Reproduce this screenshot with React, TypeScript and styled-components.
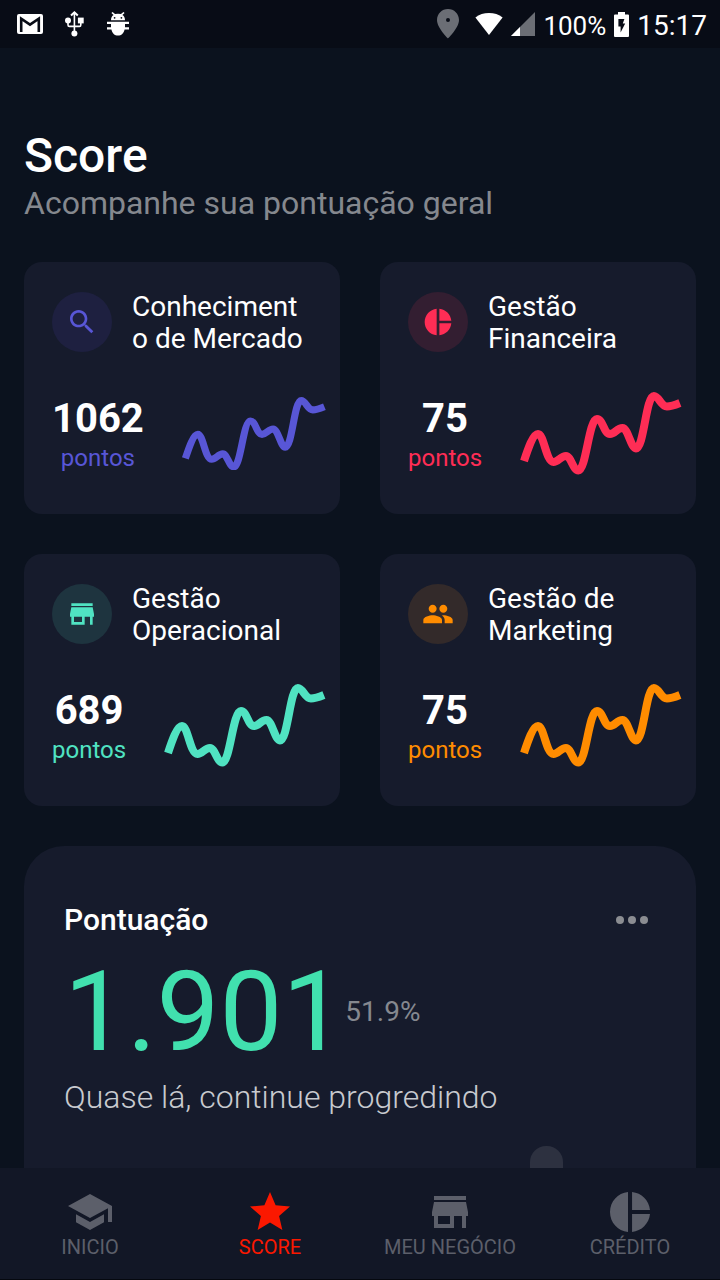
import React from "react";
import styled, { createGlobalStyle } from "styled-components";

const GlobalStyle = createGlobalStyle`
  *, *::before, *::after { box-sizing: border-box; }
  body {
    margin: 0;
    background: #0b121e;
    color: #ffffff;
    font-family: Roboto, "Liberation Sans", sans-serif;
  }
  h1, h2, h3, p { margin: 0; font-weight: 400; }
  svg { display: block; flex-shrink: 0; }
`;

const Screen = styled.div`
  display: flex;
  flex-direction: column;
  height: 100vh;
`;

const StatusBar = styled.header`
  display: flex;
  justify-content: space-between;
  align-items: center;
  flex-shrink: 0;
  height: 48px;
  padding: 0 13px 0 17px;
  background: #080c16;
`;

const StatusGroup = styled.div<{ $gap: number }>`
  display: flex;
  align-items: center;
  gap: ${(p) => p.$gap}px;
`;

const StatusText = styled.span<{ $size: number }>`
  font-size: ${(p) => p.$size}px;
  line-height: 32px;
  padding-top: 4px;
`;

const Content = styled.main`
  flex: 1;
  min-height: 0;
  overflow-y: auto;
  scrollbar-width: none;
  padding: 80px 24px 40px;
`;

const Title = styled.h1`
  font-size: 48px;
  font-weight: 500;
  line-height: 56px;
`;

const Subtitle = styled.p`
  font-size: 32px;
  line-height: 38px;
  color: #85888e;
`;

const CardGrid = styled.section`
  display: grid;
  grid-template-columns: 1fr 1fr;
  gap: 40px;
  margin: 40px 0;
`;

const Card = styled.article`
  display: flex;
  flex-direction: column;
  gap: 37px;
  min-width: 0;
  padding: 28px 14px 39px 28px;
  border-radius: 18px;
  background: #161b2c;
`;

const CardHeader = styled.div`
  display: flex;
  align-items: center;
  gap: 20px;
  height: 64px;
  padding-right: 20px;
`;

const IconDisc = styled.div<{ $color: string; $tint: string }>`
  display: flex;
  align-items: center;
  justify-content: center;
  flex-shrink: 0;
  width: 60px;
  height: 60px;
  border-radius: 50%;
  color: ${(p) => p.$color};
  background: ${(p) => p.$tint};
`;

const CardTitle = styled.h2`
  flex: 1;
  min-width: 0;
  padding-top: 2px;
  font-size: 28px;
  line-height: 32px;
  overflow-wrap: anywhere;
`;

const CardBody = styled.div`
  display: flex;
  align-items: center;
  gap: 36px;
  min-height: 84px;
`;

const Points = styled.div`
  display: flex;
  flex-direction: column;
  align-items: center;
  padding-top: 4px;
`;

const PointsValue = styled.strong`
  font-size: 40px;
  font-weight: 700;
  line-height: 46px;
`;

const PointsLabel = styled.span<{ $color: string }>`
  font-size: 24px;
  line-height: 32px;
  color: ${(p) => p.$color};
`;

const Sparkline = styled.svg<{ $color: string }>`
  flex: 1;
  min-width: 0;
  max-width: 240px;
  margin-left: auto;
  stroke: ${(p) => p.$color};
  stroke-width: 8;
  fill: none;
`;

const ScoreCard = styled.section`
  padding: 54px 40px 40px;
  border-radius: 40px;
  background: #161b2c;
`;

const ScoreHeader = styled.div`
  display: flex;
  align-items: center;
  justify-content: space-between;
  height: 40px;
`;

const ScoreTitle = styled.h3`
  font-size: 30px;
  font-weight: 500;
  line-height: 40px;
`;

const MoreButton = styled.button`
  display: flex;
  align-items: center;
  gap: 4px;
  padding: 8px;
  border: 0;
  background: none;
`;

const Dot = styled.span`
  width: 8px;
  height: 8px;
  border-radius: 50%;
  background: #8b8d92;
`;

const ScoreLine = styled.div`
  display: flex;
  align-items: center;
  padding-top: 6px;
`;

const ScoreValue = styled.strong`
  font-size: 112px;
  font-weight: 400;
  line-height: 132px;
  color: #41e0ae;
`;

const ScorePercent = styled.span`
  font-size: 28px;
  line-height: 32px;
  color: #85888f;
`;

const ScoreHint = styled.p`
  font-size: 32px;
  font-weight: 300;
  line-height: 38px;
  color: #c8cacf;
`;

const BarArea = styled.div`
  display: flex;
  align-items: flex-end;
  justify-content: flex-end;
  height: 240px;
  margin-top: 30px;
  padding-right: 93px;
`;

const Bar = styled.div`
  width: 33px;
  height: 240px;
  border-radius: 16px;
  background: #2d3140;
`;

const TabBar = styled.nav`
  display: flex;
  flex-shrink: 0;
  height: 112px;
  padding-top: 20px;
  border-bottom: 1px solid #05080f;
  background: #121726;
`;

const Tab = styled.a<{ $active?: boolean }>`
  display: flex;
  flex: 1;
  flex-direction: column;
  align-items: center;
  font-size: 20px;
  line-height: 22px;
  text-decoration: none;
  color: ${(p) => (p.$active ? "#fb1800" : "#5c5f6a")};
`;

const paths = {
  search:
    "M15.5 14h-.79l-.28-.27C15.41 12.59 16 11.11 16 9.5 16 5.91 13.09 3 9.5 3S3 5.91 3 9.5 5.91 16 9.5 16c1.61 0 3.09-.59 4.23-1.57l.27.28v.79l5 4.99L20.49 19l-4.99-5zm-6 0C7.01 14 5 11.99 5 9.5S7.01 5 9.5 5 14 7.01 14 9.5 11.99 14 9.5 14z",
  pie: "M11 2v20c-5.07-.5-9-4.79-9-10s3.93-9.5 9-10zm2.03 0v8.99H22c-.47-4.74-4.24-8.52-8.97-8.99zm0 11.01V22c4.74-.47 8.5-4.25 8.97-8.99h-8.97z",
  store:
    "M20 4H4v2h16V4zm1 10v-2l-1-5H4l-1 5v2h1v6h10v-6h4v6h2v-6h1zm-9 4H6v-4h6v4z",
  people:
    "M16 11c1.66 0 2.99-1.34 2.99-3S17.66 5 16 5c-1.66 0-3 1.34-3 3s1.34 3 3 3zm-8 0c1.66 0 2.99-1.34 2.99-3S9.66 5 8 5C6.34 5 5 6.34 5 8s1.34 3 3 3zm0 2c-2.33 0-7 1.17-7 3.5V19h14v-2.5c0-2.33-4.67-3.5-7-3.5zm8 0c-.29 0-.62.02-.97.05 1.16.84 1.97 1.97 1.97 3.45V19h6v-2.5c0-2.33-4.67-3.5-7-3.5z",
  school: "M5 13.18v4L12 21l7-3.82v-4L12 17l-7-3.82zM12 3L1 9l11 6 9-4.91V17h2V9L12 3z",
  star: "M12 17.27L18.18 21l-1.64-7.03L22 9.24l-7.19-.61L12 2 9.19 8.63 2 9.24l5.46 4.73L5.82 21z",
};

type IconName = keyof typeof paths;

const Icon = ({ name, size }: { name: IconName; size: number }) => (
  <svg width={size} height={size} viewBox="0 0 24 24" fill="currentColor" aria-hidden="true">
    <path d={paths[name]} />
  </svg>
);

const MailIcon = () => (
  <svg width="26" height="20" viewBox="0 0 26 20" aria-hidden="true">
    <rect width="26" height="20" rx="2" fill="#fff" />
    <path d="M4.2 18V4.6L13 10.6L21.8 4.6V18" fill="none" stroke="#080c16" strokeWidth="2.6" />
  </svg>
);

const UsbIcon = () => (
  <svg width="20" height="26" viewBox="0 0 20 26" aria-hidden="true">
    <g fill="none" stroke="#fff" strokeWidth="1.6">
      <path d="M9.4 1.6V22M3 10V14Q3 15.4 4.4 15.4H14.4Q15.8 15.4 15.8 14V10" />
      <path d="M6 4.6L9.4 1.4L12.8 4.6" strokeWidth="2" />
    </g>
    <g fill="#fff">
      <circle cx="3" cy="9.6" r="3" />
      <rect x="12.9" y="6.6" width="5.8" height="5.8" />
      <circle cx="9.4" cy="22.4" r="3" />
    </g>
  </svg>
);

const BugIcon = () => (
  <svg width="22" height="24" viewBox="0 0 22 24" aria-hidden="true">
    <path
      fill="#fff"
      d="M4 8.2C4 5.6 5 3.8 6.6 2.9L4.4 1L5.6 0L8 2.1Q11 1.2 14 2.1L16.4 0L17.6 1L15.4 2.9C17 3.8 18 5.6 18 8.2ZM0 9.8H22V12H18V15.2H22V17.4H17.6C16.8 21 14.4 23.6 11 23.6S5.2 21 4.4 17.4H0V15.2H4V12H0Z"
    />
    <circle cx="7.6" cy="5.8" r="0.9" fill="#080c16" />
    <circle cx="14.4" cy="5.8" r="0.9" fill="#080c16" />
  </svg>
);

const PinIcon = () => (
  <svg width="22" height="30" viewBox="0 0 22 30" aria-hidden="true">
    <path
      fill="#6b6e75"
      fillRule="evenodd"
      d="M11 0C4.9 0 0 4.9 0 11C0 19 11 29.4 11 29.4S22 19 22 11C22 4.9 17.1 0 11 0ZM11 9A2 2 0 1 1 11 13A2 2 0 1 1 11 9Z"
    />
  </svg>
);

const WifiIcon = () => (
  <svg width="28" height="24" viewBox="0 0 28 24" aria-hidden="true">
    <path fill="#fff" d="M14 23L0.4 5.4C4 2.4 9 1 14 1S24 2.4 27.6 5.4Z" />
  </svg>
);

const SignalIcon = () => (
  <svg width="24" height="24" viewBox="0 0 24 24" aria-hidden="true">
    <path fill="#6b6e75" d="M0 24L24 0V24Z" />
    <path fill="#fff" d="M0 24L9 15V24Z" />
  </svg>
);

const BatteryIcon = () => (
  <svg width="15" height="25" viewBox="0 0 15 25" aria-hidden="true">
    <path fill="#fff" d="M4 0H11V2.4H14Q15 2.4 15 3.4V24Q15 25 14 25H1Q0 25 0 24V3.4Q0 2.4 1 2.4H4Z" />
    <path fill="#080c16" d="M4.4 7H10.4L8.8 11.4H11.2L6.6 20.6V14.6H4.4Z" />
  </svg>
);

const areas: {
  title: string;
  value: string;
  color: string;
  tint: string;
  icon: IconName;
}[] = [
  { title: "Conhecimento de Mercado", value: "1062", color: "#5856d6", tint: "#1e2040", icon: "search" },
  { title: "Gestão Financeira", value: "75", color: "#ff2d55", tint: "#331e31", icon: "pie" },
  { title: "Gestão Operacional", value: "689", color: "#50e3c2", tint: "#1e343f", icon: "store" },
  { title: "Gestão de Marketing", value: "75", color: "#ff8c00", tint: "#332a2a", icon: "people" },
];

const tabs: { label: string; icon: IconName; active?: boolean }[] = [
  { label: "INICIO", icon: "school" },
  { label: "SCORE", icon: "star", active: true },
  { label: "MEU NEGÓCIO", icon: "store" },
  { label: "CRÉDITO", icon: "pie" },
];

export default function App() {
  return (
    <Screen>
      <GlobalStyle />
      <StatusBar>
        <StatusGroup $gap={22}>
          <MailIcon />
          <UsbIcon />
          <BugIcon />
        </StatusGroup>
        <StatusGroup $gap={8}>
          <StatusGroup $gap={16}>
            <PinIcon />
            <WifiIcon />
          </StatusGroup>
          <SignalIcon />
          <StatusText $size={26}>100%</StatusText>
          <BatteryIcon />
          <StatusText $size={28}>15:17</StatusText>
        </StatusGroup>
      </StatusBar>

      <Content>
        <Title>Score</Title>
        <Subtitle>Acompanhe sua pontuação geral</Subtitle>

        <CardGrid>
          {areas.map((area) => (
            <Card key={area.title}>
              <CardHeader>
                <IconDisc $color={area.color} $tint={area.tint}>
                  <Icon name={area.icon} size={32} />
                </IconDisc>
                <CardTitle>{area.title}</CardTitle>
              </CardHeader>
              <CardBody>
                <Points>
                  <PointsValue>{area.value}</PointsValue>
                  <PointsLabel $color={area.color}>pontos</PointsLabel>
                </Points>
                <Sparkline $color={area.color} viewBox="0 0 164 84" aria-hidden="true">
                  <path d="M6 70C10 58 15 43 20 43C26 43 28 71 35.5 71C40 71 43 65 48 65C53 65 55 79.5 60.5 79.5C68 79.5 71 28 79 28C85 28 86 43 92 43C97 43 99 37 104.5 37C110 37 113 57.5 118 57.5C126 57.5 128 5 136 5C141 5 143 15.5 149 15.5C153 15.5 157 14 162 12" />
                </Sparkline>
              </CardBody>
            </Card>
          ))}
        </CardGrid>

        <ScoreCard>
          <ScoreHeader>
            <ScoreTitle>Pontuação</ScoreTitle>
            <MoreButton type="button" aria-label="Mais opções">
              <Dot />
              <Dot />
              <Dot />
            </MoreButton>
          </ScoreHeader>
          <ScoreLine>
            <ScoreValue>1.901</ScoreValue>
            <ScorePercent>51.9%</ScorePercent>
          </ScoreLine>
          <ScoreHint>Quase lá, continue progredindo</ScoreHint>
          <BarArea>
            <Bar />
          </BarArea>
        </ScoreCard>
      </Content>

      <TabBar>
        {tabs.map((tab) => (
          <Tab key={tab.label} href="#" $active={tab.active} aria-current={tab.active ? "page" : undefined}>
            <Icon name={tab.icon} size={48} />
            {tab.label}
          </Tab>
        ))}
      </TabBar>
    </Screen>
  );
}
